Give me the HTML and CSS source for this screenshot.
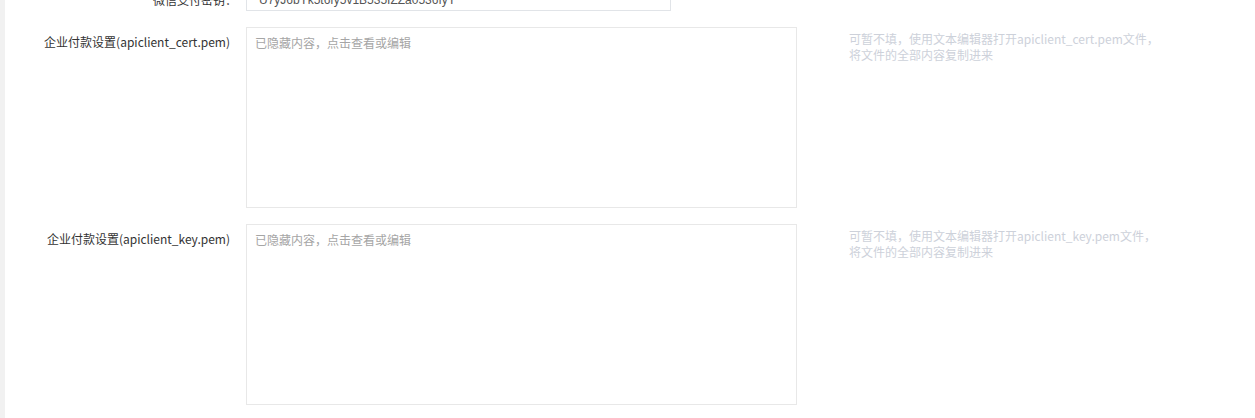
FILE: index.html
```html
<!DOCTYPE html>
<html lang="zh-CN">
<head>
  <meta charset="UTF-8">
  <title>支付设置</title>
  <link rel="stylesheet" href="styles.css">
</head>
<body>
  <div class="page">
    <div class="side"></div>
    <div class="form">
      <div class="form-row first">
        <label class="form-label">微信支付密钥：</label>
        <div class="form-field">
          <input class="text-input" type="text" value="U7yJ6bYk5t6fy5v1B535IZZa0536fyY">
        </div>
      </div>
      <div class="form-row">
        <label class="form-label">企业付款设置(apiclient_cert.pem)</label>
        <div class="form-field">
          <textarea class="text-area" placeholder="已隐藏内容，点击查看或编辑"></textarea>
        </div>
        <div class="help">可暂不填，使用文本编辑器打开apiclient_cert.pem文件，将文件的全部内容复制进来</div>
      </div>
      <div class="form-row">
        <label class="form-label">企业付款设置(apiclient_key.pem)</label>
        <div class="form-field">
          <textarea class="text-area" placeholder="已隐藏内容，点击查看或编辑"></textarea>
        </div>
        <div class="help">可暂不填，使用文本编辑器打开apiclient_key.pem文件，将文件的全部内容复制进来</div>
      </div>
    </div>
  </div>
</body>
</html>
```

FILE: styles.css
```css
body {
  margin: 0;
  padding: 0;
  background: #fff;
  font-family: "Noto Sans CJK SC", "Noto Sans", sans-serif;
  font-size: 12px;
  color: #333;
  overflow: hidden;
}
.page {
  display: flex;
  height: 418px;
}
.side {
  width: 5px;
  background: #f1f1f1;
  flex-shrink: 0;
}
.form {
  flex: 1;
}
.form-row {
  display: flex;
  align-items: flex-start;
  margin-bottom: 16px;
}
.form-row.first {
  margin-top: -24px;
}
.form-label {
  width: 225px;
  padding-top: 6px;
  text-align: right;
  line-height: 18px;
  flex-shrink: 0;
}
.first .form-label {
  padding-top: 15px;
  width: 232px;
}
.form-field {
  margin-left: 16px;
}
.first .form-field {
  margin-left: 9px;
}
.text-input {
  display: block;
  box-sizing: border-box;
  width: 425px;
  height: 35px;
  border: 1px solid #e1e4e8;
  padding: 14px 12px 2px;
  font-family: "Liberation Sans", sans-serif;
  font-size: 12px;
  color: #555;
  outline: none;
}
.text-area {
  display: block;
  box-sizing: border-box;
  width: 551px;
  height: 181px;
  border: 1px solid #e8e8e8;
  padding: 6px 8px;
  resize: none;
  font-family: inherit;
  font-size: 12px;
  line-height: 18px;
  outline: none;
}
.text-area::placeholder {
  color: #a5a5a5;
}
.help {
  margin-left: 52px;
  padding-top: 4px;
  width: 312px;
  line-height: 16px;
  color: #cdd1da;
}
```
